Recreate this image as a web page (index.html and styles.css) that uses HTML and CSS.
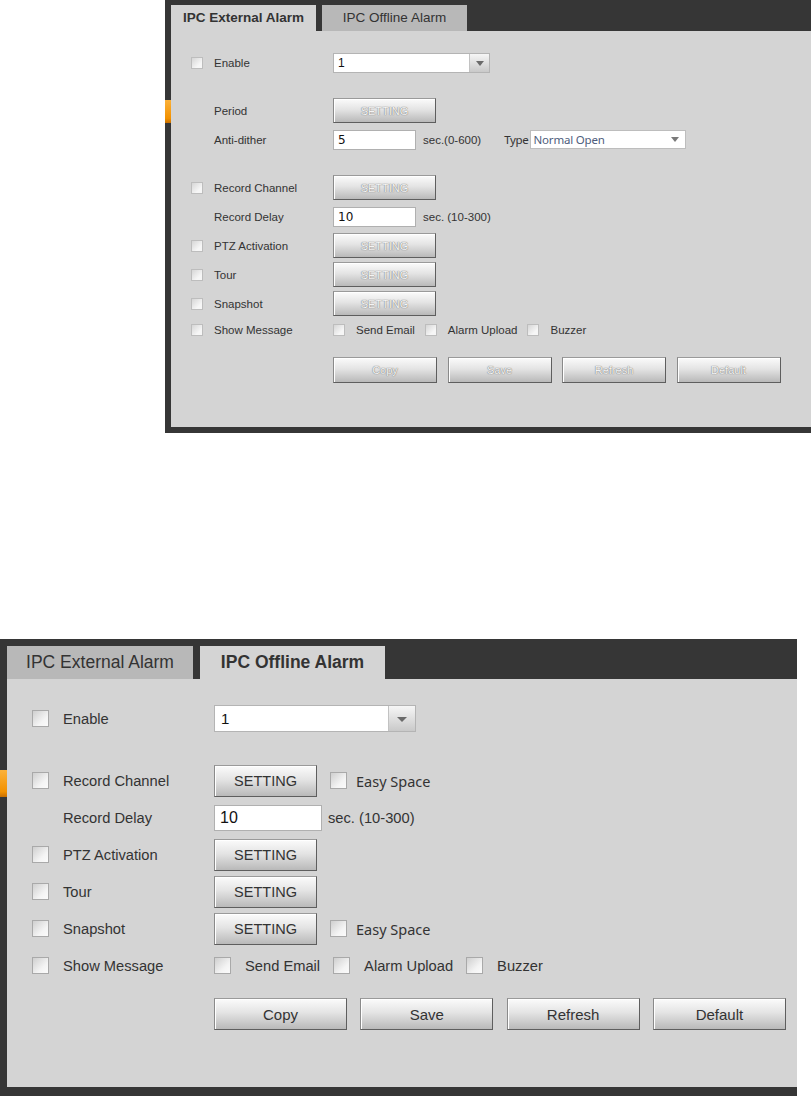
FILE: index.html
```html
<!DOCTYPE html>
<html lang="en">

<head>
    <meta charset="utf-8">
    <meta name="viewport" content="width=device-width, initial-scale=1.0">
    <title>IPC Alarm</title>

    <link rel="stylesheet" href="styles.css">
</head>

<body>

    <!-- first capture: external alarm -->
    <div class="frame frame-a">
        <span class="marker"></span>
        <div class="tabs">
            <div class="tab active">IPC External Alarm</div>
            <div class="tab">IPC Offline Alarm</div>
        </div>
        <div class="panel">
            <div class="row">
                <input type="checkbox" class="chk">
                <span class="lbl">Enable</span>
                <div class="combo"><span class="val">1</span><span class="arrow"></span></div>
            </div>
            <div class="spacer"></div>
            <div class="row">
                <span class="nochk"></span>
                <span class="lbl">Period</span>
                <button class="btn" disabled>SETTING</button>
            </div>
            <div class="row">
                <span class="nochk"></span>
                <span class="lbl">Anti-dither</span>
                <input class="num" type="text" value="5">
                <span class="hint">sec.(0-600)</span>
                <span class="type">Type</span>
                <div class="picker"><span>Normal Open</span><span class="tri"></span></div>
            </div>
            <div class="spacer"></div>
            <div class="row">
                <input type="checkbox" class="chk">
                <span class="lbl">Record Channel</span>
                <button class="btn" disabled>SETTING</button>
            </div>
            <div class="row">
                <span class="nochk"></span>
                <span class="lbl">Record Delay</span>
                <input class="num" type="text" value="10">
                <span class="hint">sec. (10-300)</span>
            </div>
            <div class="row">
                <input type="checkbox" class="chk">
                <span class="lbl">PTZ Activation</span>
                <button class="btn" disabled>SETTING</button>
            </div>
            <div class="row">
                <input type="checkbox" class="chk">
                <span class="lbl">Tour</span>
                <button class="btn" disabled>SETTING</button>
            </div>
            <div class="row">
                <input type="checkbox" class="chk">
                <span class="lbl">Snapshot</span>
                <button class="btn" disabled>SETTING</button>
            </div>
            <div class="row row-msg">
                <input type="checkbox" class="chk">
                <span class="lbl">Show Message</span>
                <label class="opt"><input type="checkbox" class="chk">Send Email</label>
                <label class="opt"><input type="checkbox" class="chk">Alarm Upload</label>
                <label class="opt"><input type="checkbox" class="chk">Buzzer</label>
            </div>
            <div class="actions">
                <button class="btn big" disabled>Copy</button>
                <button class="btn big" disabled>Save</button>
                <button class="btn big" disabled>Refresh</button>
                <button class="btn big" disabled>Default</button>
            </div>
        </div>
    </div>

    <!-- second capture: offline alarm -->
    <div class="frame frame-b">
        <span class="marker"></span>
        <div class="tabs">
            <div class="tab">IPC External Alarm</div>
            <div class="tab active">IPC Offline Alarm</div>
        </div>
        <div class="panel">
            <div class="row">
                <input type="checkbox" class="chk">
                <span class="lbl">Enable</span>
                <div class="combo"><span class="val">1</span><span class="arrow"></span></div>
            </div>
            <div class="spacer"></div>
            <div class="row">
                <input type="checkbox" class="chk">
                <span class="lbl">Record Channel</span>
                <button class="btn">SETTING</button>
                <label class="opt easy"><input type="checkbox" class="chk">Easy Space</label>
            </div>
            <div class="row">
                <span class="nochk"></span>
                <span class="lbl">Record Delay</span>
                <input class="num" type="text" value="10">
                <span class="hint">sec. (10-300)</span>
            </div>
            <div class="row">
                <input type="checkbox" class="chk">
                <span class="lbl">PTZ Activation</span>
                <button class="btn">SETTING</button>
            </div>
            <div class="row">
                <input type="checkbox" class="chk">
                <span class="lbl">Tour</span>
                <button class="btn">SETTING</button>
            </div>
            <div class="row">
                <input type="checkbox" class="chk">
                <span class="lbl">Snapshot</span>
                <button class="btn">SETTING</button>
                <label class="opt easy"><input type="checkbox" class="chk">Easy Space</label>
            </div>
            <div class="row">
                <input type="checkbox" class="chk">
                <span class="lbl">Show Message</span>
                <label class="opt"><input type="checkbox" class="chk">Send Email</label>
                <label class="opt"><input type="checkbox" class="chk">Alarm Upload</label>
                <label class="opt"><input type="checkbox" class="chk">Buzzer</label>
            </div>
            <div class="actions">
                <button class="btn big">Copy</button>
                <button class="btn big">Save</button>
                <button class="btn big">Refresh</button>
                <button class="btn big">Default</button>
            </div>
        </div>
    </div>

</body>

</html>
```

FILE: styles.css
```css
body {
    margin: 0;
    background-color: white;
    font-family: "Liberation Sans", Arial, sans-serif;
    color: #333;
    overflow: hidden;
}

.frame {
    position: relative;
    background-color: #363636;
}

.marker {
    position: absolute;
    left: 0;
    background: linear-gradient(#fbb13a, #f29100 80%, #c86f00);
}

.tabs {
    display: flex;
    align-items: flex-end;
}

.tab {
    text-align: center;
    background-color: #b8b8b8;
    color: #333;
    white-space: nowrap;
}

.tab.active {
    background-color: #d4d4d4;
    font-weight: bold;
}

.panel {
    background-color: #d4d4d4;
    box-sizing: border-box;
}

.row {
    display: flex;
    align-items: center;
}

.lbl,
.hint,
.opt {
    white-space: nowrap;
}

.chk {
    appearance: none;
    -webkit-appearance: none;
    margin: 0;
    box-sizing: border-box;
    flex: none;
}

.nochk {
    flex: none;
}

.opt {
    display: flex;
    align-items: center;
}

.btn {
    box-sizing: border-box;
    border: 1px solid #5e5e5e;
    border-top-color: #9a9a9a;
    border-left-color: #8a8a8a;
    box-shadow: inset 1px 1px 0 #ffffff;
    background: linear-gradient(#fbfbfb, #e4e4e4 45%, #b9b9b9);
    color: #333;
    font-family: "Liberation Sans", Arial, sans-serif;
    padding: 0;
    flex: none;
}

.btn:disabled {
    color: #f4f4f4;
    text-shadow: 0 0 1px #7a7a7a, 0 0 1px #7a7a7a;
}

.combo {
    display: flex;
    box-sizing: border-box;
    background-color: white;
    border: 1px solid #b4b4b4;
    flex: none;
}

.combo .val {
    flex: 1;
    color: #111;
}

.combo .arrow {
    position: relative;
    box-sizing: border-box;
    border-left: 1px solid #c2c2c2;
    background: linear-gradient(#f6f6f6, #c9c9c9);
}

.combo .arrow::after {
    content: "";
    position: absolute;
    left: 50%;
    top: 50%;
    border-style: solid;
    border-color: #6a6a6a transparent transparent transparent;
}

.num {
    box-sizing: border-box;
    border: 1px solid #b0b0b0;
    background-color: white;
    color: #111;
    margin: 0;
    flex: none;
}

/* ---------- first capture ---------- */

.frame-a {
    margin-left: 165px;
    height: 433px;
    padding: 0 0 6px 6px;
    box-sizing: border-box;
}

.frame-a .marker {
    top: 100px;
    width: 6px;
    height: 23px;
}

.frame-a .tabs {
    height: 31px;
    gap: 6px;
}

.frame-a .tab {
    width: 145px;
    height: 26px;
    line-height: 26px;
    font-size: 13.5px;
}

.frame-a .panel {
    height: 396px;
    padding: 17px 0 0 20px;
    font-size: 11.5px;
}

.frame-a .row {
    height: 29px;
}

.frame-a .row-msg {
    height: 24px;
}

.frame-a .spacer {
    height: 19px;
}

.frame-a .chk {
    width: 12px;
    height: 12px;
    border: 1px solid #bdbdbd;
    background: linear-gradient(135deg, #d6d6d6, #f6f6f6 70%);
    margin-right: 11px;
}

.frame-a .nochk {
    width: 23px;
}

.frame-a .lbl {
    width: 119px;
}

.frame-a .opt {
    margin-right: 10px;
}

.frame-a .btn {
    width: 103px;
    height: 25px;
    font-size: 11px;
}

.frame-a .combo {
    width: 157px;
    height: 20px;
}

.frame-a .combo .val {
    padding-left: 4px;
    line-height: 18px;
    font-size: 12px;
}

.frame-a .combo .arrow {
    width: 20px;
}

.frame-a .combo .arrow::after {
    margin: -2px 0 0 -4px;
    border-width: 5px 4px 0 4px;
}

.frame-a .num {
    width: 83px;
    height: 20px;
    padding: 0 4px;
    font-family: "DejaVu Sans", Verdana, sans-serif;
    font-size: 12px;
}

.frame-a .hint {
    margin-left: 7px;
}

.frame-a .type {
    margin-left: 23px;
    font-family: "Noto Sans", sans-serif;
    font-size: 11.5px;
    letter-spacing: -0.3px;
}

.picker {
    position: relative;
    box-sizing: border-box;
    width: 156px;
    height: 19px;
    margin-left: 1px;
    padding-left: 3px;
    border: 1px solid #bdbdbd;
    background-color: white;
    color: #4e5d7c;
    font-family: "Noto Sans", sans-serif;
    font-size: 11.5px;
    line-height: 17px;
    letter-spacing: -0.2px;
}

.picker .tri {
    position: absolute;
    right: 6px;
    top: 6px;
    border-style: solid;
    border-width: 5px 4px 0 4px;
    border-color: #7a7a7a transparent transparent transparent;
}

.frame-a .actions {
    display: flex;
    gap: 10.5px;
    margin-top: 15px;
    padding-left: 142px;
}

.frame-a .btn.big {
    width: 104px;
    height: 26px;
}

/* ---------- second capture ---------- */

.frame-b {
    width: 797px;
    margin-top: 206px;
    padding: 0 0 9px 7px;
    box-sizing: border-box;
}

.frame-b .marker {
    top: 131px;
    width: 7px;
    height: 27px;
}

.frame-b .tabs {
    height: 40px;
    gap: 7px;
}

.frame-b .tab {
    width: 186px;
    height: 33px;
    line-height: 33px;
    font-size: 17.5px;
}

.frame-b .tab.active {
    width: 185px;
}

.frame-b .panel {
    height: 408px;
    padding: 21px 0 0 25px;
    font-size: 14.7px;
}

.frame-b .row {
    height: 37px;
}

.frame-b .spacer {
    height: 25px;
}

.frame-b .chk {
    width: 17px;
    height: 17px;
    border: 1px solid #a9a9a9;
    background: linear-gradient(135deg, #cfcfcf, #f4f4f4 65%, #fbfbfb);
    margin-right: 14px;
}

.frame-b .nochk {
    width: 31px;
}

.frame-b .lbl {
    width: 151px;
}

.frame-b .opt {
    margin-right: 13px;
}

.frame-b .opt .chk {
    margin-right: 14px;
}

.frame-b .opt.easy {
    margin-left: 13px;
    font-family: "Noto Sans", sans-serif;
    font-size: 14.5px;
}

.frame-b .opt.easy .chk {
    margin-right: 9px;
}

.frame-b .btn {
    width: 103px;
    height: 32px;
    font-size: 14.5px;
}

.frame-b .combo {
    width: 202px;
    height: 27px;
}

.frame-b .combo .val {
    padding-left: 6px;
    line-height: 25px;
    font-size: 15px;
}

.frame-b .combo .arrow {
    width: 27px;
}

.frame-b .combo .arrow::after {
    margin: -2px 0 0 -5px;
    border-width: 5px 5px 0 5px;
}

.frame-b .num {
    width: 108px;
    height: 26px;
    padding: 0 5px;
    font-size: 16px;
}

.frame-b .hint {
    margin-left: 6px;
}

.frame-b .actions {
    display: flex;
    gap: 13.3px;
    margin-top: 14px;
    padding-left: 182px;
}

.frame-b .btn.big {
    width: 133px;
    height: 32px;
    font-size: 15px;
}
```
